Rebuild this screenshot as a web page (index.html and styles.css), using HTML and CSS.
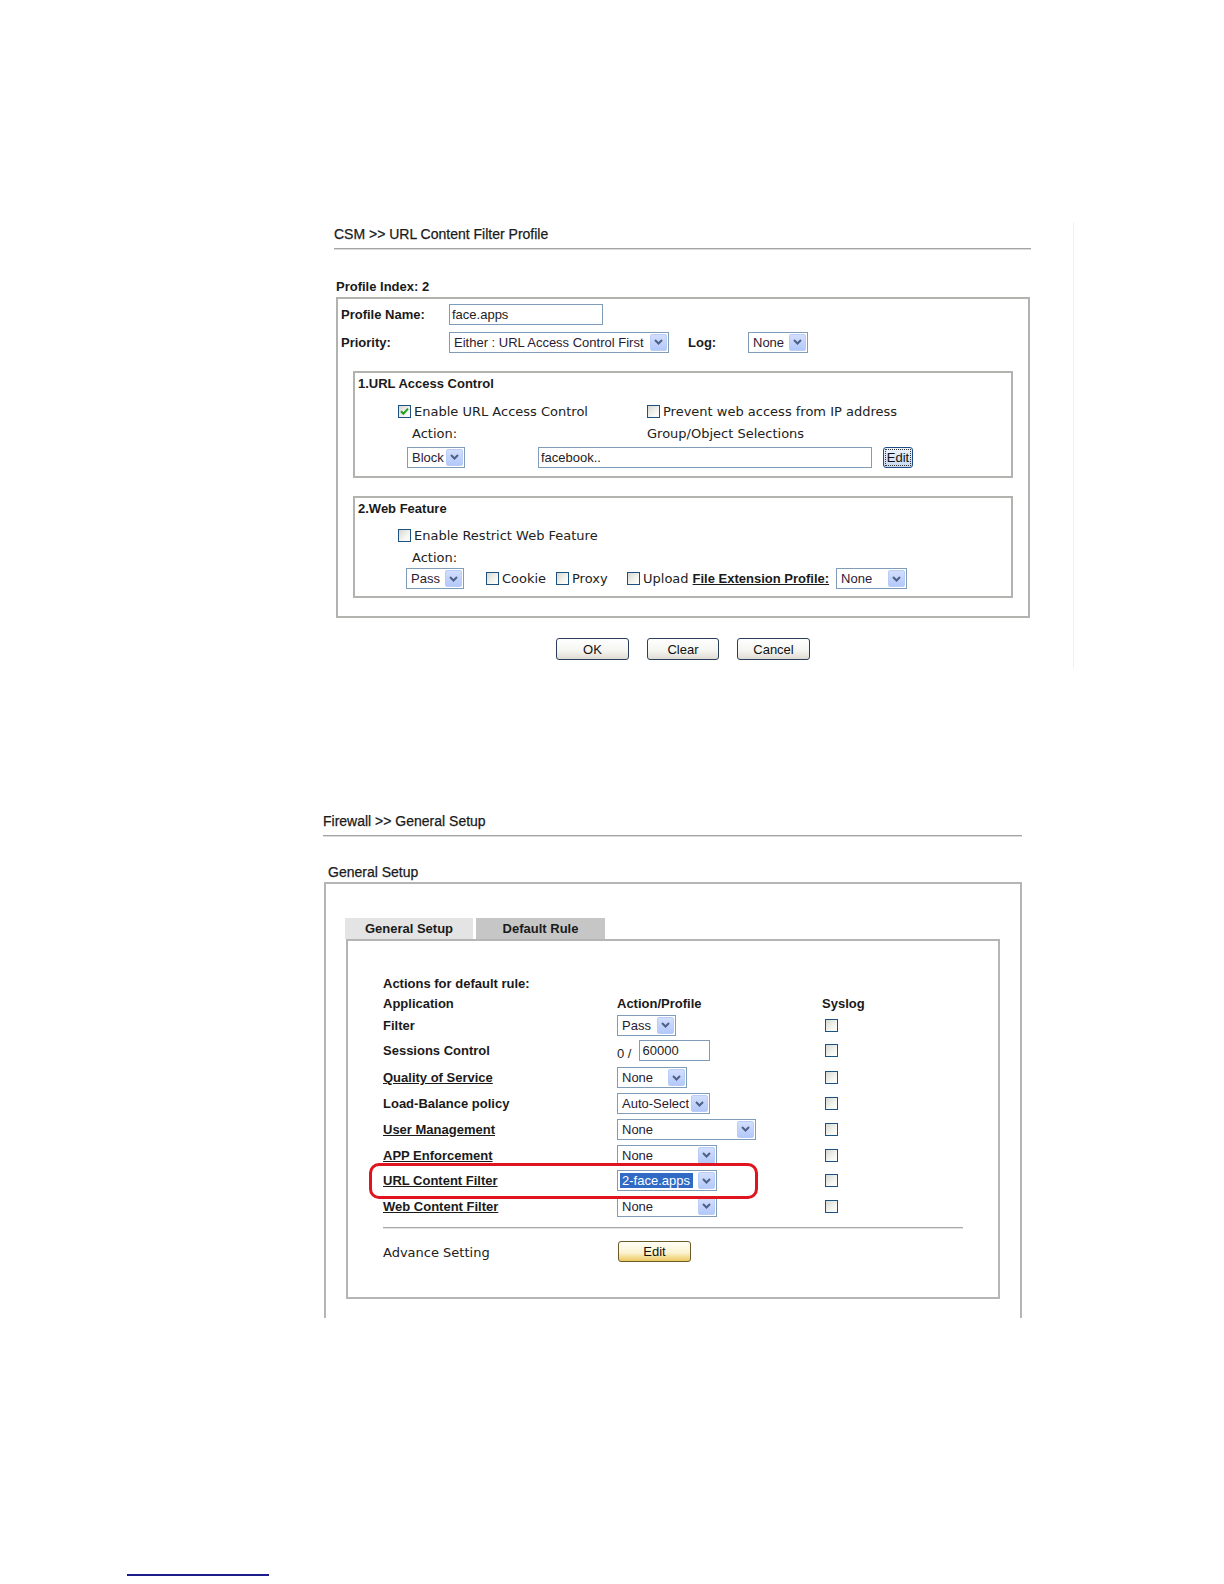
FILE: index.html
```html
<!DOCTYPE html>
<html>
<head>
<meta charset="utf-8">
<link rel="stylesheet" href="styles.css">
</head>
<body>
<div class="page">

  <section class="shot shot-csm">
    <div class="crumb">CSM &gt;&gt; URL Content Filter Profile</div>
    <div class="rule rule-csm"></div>
    <div class="idx">Profile Index: 2</div>
    <div class="frame">
      <div class="frow">
        <span class="flabel">Profile Name:</span>
        <span class="tbox w154">face.apps</span>
      </div>
      <div class="frow frow2">
        <span class="flabel">Priority:</span>
        <span class="sel w220"><span class="sel-text">Either : URL Access Control First</span><span class="sel-btn"><svg width="9" height="6" viewBox="0 0 9 6"><polyline points="1,1 4.5,4.5 8,1" fill="none" stroke="#4d6185" stroke-width="2"/></svg></span></span>
        <span class="loglabel">Log:</span>
        <span class="sel w60"><span class="sel-text">None</span><span class="sel-btn"><svg width="9" height="6" viewBox="0 0 9 6"><polyline points="1,1 4.5,4.5 8,1" fill="none" stroke="#4d6185" stroke-width="2"/></svg></span></span>
      </div>

      <div class="sub sub-url">
        <div class="sub-title">1.URL Access Control</div>
        <div class="srow cbrow">
          <span class="chk c249"><span class="cb"><svg width="11" height="11" viewBox="0 0 11 11"><polyline points="2,5.2 4.4,7.8 9,2.6" fill="none" stroke="#21a121" stroke-width="2"/></svg></span>Enable URL Access Control</span>
          <span class="chk"><span class="cb"></span>Prevent web access from IP address</span>
        </div>
        <div class="srow actrow">
          <span class="vtext c235">Action:</span>
          <span class="vtext">Group/Object Selections</span>
        </div>
        <div class="srow ctlrow">
          <span class="sel w58"><span class="sel-text">Block</span><span class="sel-btn"><svg width="9" height="6" viewBox="0 0 9 6"><polyline points="1,1 4.5,4.5 8,1" fill="none" stroke="#4d6185" stroke-width="2"/></svg></span></span>
          <span class="tbox w334 ml73">facebook..</span>
          <span class="btn-edit1"><span class="focus">Edit</span></span>
        </div>
      </div>

      <div class="sub sub-web">
        <div class="sub-title">2.Web Feature</div>
        <div class="srow cbrow cbrow2">
          <span class="chk"><span class="cb"></span>Enable Restrict Web Feature</span>
        </div>
        <div class="srow actrow">
          <span class="vtext">Action:</span>
        </div>
        <div class="srow ctlrow2">
          <span class="sel w58"><span class="sel-text">Pass</span><span class="sel-btn"><svg width="9" height="6" viewBox="0 0 9 6"><polyline points="1,1 4.5,4.5 8,1" fill="none" stroke="#4d6185" stroke-width="2"/></svg></span></span>
          <span class="chk c70 ml22"><span class="cb"></span>Cookie</span>
          <span class="chk c71"><span class="cb"></span>Proxy</span>
          <span class="chk"><span class="cb"></span>Upload</span>
          <span class="fext">File Extension Profile:</span>
          <span class="sel w71"><span class="sel-text">None</span><span class="sel-btn"><svg width="9" height="6" viewBox="0 0 9 6"><polyline points="1,1 4.5,4.5 8,1" fill="none" stroke="#4d6185" stroke-width="2"/></svg></span></span>
        </div>
      </div>
    </div>
    <div class="btns">
      <span class="btn w73">OK</span>
      <span class="btn w72">Clear</span>
      <span class="btn w73">Cancel</span>
    </div>
  </section>

  <section class="shot shot-fw">
    <div class="crumb">Firewall &gt;&gt; General Setup</div>
    <div class="rule rule-fw"></div>
    <div class="glabel">General Setup</div>
    <div class="gframe">
      <div class="tabs">
        <span class="tab tab-a">General Setup</span>
        <span class="tab tab-b">Default Rule</span>
      </div>
      <div class="inner">
        <div class="rules">
          <div class="cell h20 b span3">Actions for default rule:</div>
          <div class="cell h20 b">Application</div>
          <div class="cell h20 b">Action/Profile</div>
          <div class="cell h20 b">Syslog</div>

          <div class="cell h24 b">Filter</div>
          <div class="cell h24"><span class="sel w59"><span class="sel-text">Pass</span><span class="sel-btn"><svg width="9" height="6" viewBox="0 0 9 6"><polyline points="1,1 4.5,4.5 8,1" fill="none" stroke="#4d6185" stroke-width="2"/></svg></span></span></div>
          <div class="cell h24"><span class="cb cbs"></span></div>

          <div class="cell h27 b">Sessions Control</div>
          <div class="cell h27"><span class="zero">0 /</span><span class="tbox w71">60000</span></div>
          <div class="cell h27"><span class="cb cbs"></span></div>

          <div class="cell h27 b u">Quality of Service</div>
          <div class="cell h27"><span class="sel w70"><span class="sel-text">None</span><span class="sel-btn"><svg width="9" height="6" viewBox="0 0 9 6"><polyline points="1,1 4.5,4.5 8,1" fill="none" stroke="#4d6185" stroke-width="2"/></svg></span></span></div>
          <div class="cell h27"><span class="cb cbs"></span></div>

          <div class="cell h25 b">Load-Balance policy</div>
          <div class="cell h25"><span class="sel w93"><span class="sel-text">Auto-Select</span><span class="sel-btn"><svg width="9" height="6" viewBox="0 0 9 6"><polyline points="1,1 4.5,4.5 8,1" fill="none" stroke="#4d6185" stroke-width="2"/></svg></span></span></div>
          <div class="cell h25"><span class="cb cbs"></span></div>

          <div class="cell h26 b u">User Management</div>
          <div class="cell h26"><span class="sel w139"><span class="sel-text">None</span><span class="sel-btn"><svg width="9" height="6" viewBox="0 0 9 6"><polyline points="1,1 4.5,4.5 8,1" fill="none" stroke="#4d6185" stroke-width="2"/></svg></span></span></div>
          <div class="cell h26"><span class="cb cbs"></span></div>

          <div class="cell h26 b u">APP Enforcement</div>
          <div class="cell h26"><span class="sel w100"><span class="sel-text">None</span><span class="sel-btn"><svg width="9" height="6" viewBox="0 0 9 6"><polyline points="1,1 4.5,4.5 8,1" fill="none" stroke="#4d6185" stroke-width="2"/></svg></span></span></div>
          <div class="cell h26"><span class="cb cbs"></span></div>

          <div class="cell h25 b u">URL Content Filter</div>
          <div class="cell h25"><span class="sel w100 sel-hl"><span class="sel-text"><span class="hl">2-face.apps</span></span><span class="sel-btn"><svg width="9" height="6" viewBox="0 0 9 6"><polyline points="1,1 4.5,4.5 8,1" fill="none" stroke="#4d6185" stroke-width="2"/></svg></span></span></div>
          <div class="cell h25"><span class="cb cbs"></span></div>

          <div class="cell h26 b u">Web Content Filter</div>
          <div class="cell h26"><span class="sel w100"><span class="sel-text">None</span><span class="sel-btn"><svg width="9" height="6" viewBox="0 0 9 6"><polyline points="1,1 4.5,4.5 8,1" fill="none" stroke="#4d6185" stroke-width="2"/></svg></span></span></div>
          <div class="cell h26"><span class="cb cbs"></span></div>
        </div>
        <div class="sep"></div>
        <div class="adv">
          <span class="adv-label">Advance Setting</span>
          <span class="btn-edit2">Edit</span>
        </div>
        <div class="callout"></div>
      </div>
    </div>
  </section>

  <div class="footrule"></div>
</div>
</body>
</html>
```

FILE: styles.css
```css
* { box-sizing: border-box; }

body {
  margin: 0;
  background: #fff;
  font-family: "Liberation Sans", Arial, sans-serif;
  font-size: 13px;
  color: #111;
}

.page {
  width: 1224px;
  height: 1584px;
  overflow: hidden;
  padding-top: 222px;
}

/* ---------- shared ---------- */
.crumb {
  font-size: 14px;
  line-height: 20px;
  height: 20px;
  color: #1a1a1a;
  -webkit-text-stroke: 0.25px #1a1a1a;
}

.rule {
  height: 2px;
  margin-top: 4px;
  border-top: 1px solid #a4a4a4;
  border-bottom: 1px solid #dcdcdc;
}

.tbox {
  display: inline-flex;
  align-items: center;
  height: 21px;
  border: 1px solid #7f9db9;
  background: #fff;
  padding-left: 2px;
  font-size: 13px;
  color: #222;
}

.sel {
  display: inline-flex;
  align-items: center;
  justify-content: space-between;
  height: 21px;
  border: 1px solid #7f9db9;
  background: #fff;
  padding-left: 4px;
  font-size: 13px;
  color: #2a1a33;
}
.sel-text { white-space: nowrap; overflow: hidden; }
.sel-btn {
  flex: none;
  width: 17px;
  height: 17px;
  margin-right: 1px;
  border: 1px solid #b9cdf6;
  border-radius: 2px;
  background: linear-gradient(#d2defd, #b3c9fa);
  display: flex;
  align-items: center;
  justify-content: center;
}

.cb {
  display: inline-flex;
  align-items: center;
  justify-content: center;
  flex: none;
  width: 13px;
  height: 13px;
  border: 1px solid #1c5180;
  background: linear-gradient(135deg, #d8d8d2 0%, #f4f4f0 60%, #ffffff 100%);
  margin-right: 3px;
}

.chk {
  display: inline-flex;
  align-items: center;
  font-family: "DejaVu Sans", Verdana, sans-serif;
  font-size: 13px;
  color: #222;
  white-space: nowrap;
}

.vtext {
  font-family: "DejaVu Sans", Verdana, sans-serif;
  font-size: 13px;
  color: #222;
}

/* widths */
.w58 { width: 58px; }
.w59 { width: 59px; }
.w60 { width: 60px; }
.w70 { width: 70px; }
.w71 { width: 71px; }
.w72 { width: 72px; }
.w73 { width: 73px; }
.w93 { width: 93px; }
.w100 { width: 100px; }
.w139 { width: 139px; }
.w154 { width: 154px; }
.w220 { width: 220px; }
.w334 { width: 334px; }
.c70 { width: 70px; }
.c71 { width: 71px; }
.c235 { width: 235px; display: inline-block; }
.c249 { width: 249px; }
.ml22 { margin-left: 22px; }
.ml73 { margin-left: 73px; }

/* ---------- CSM screenshot ---------- */
.shot-csm {
  margin-left: 334px;
  width: 740px;
  padding-top: 2px;
  padding-bottom: 8px;
  border-right: 1px solid #f1f1f1;
}
.rule-csm { width: 697px; }

.idx {
  margin-top: 27px;
  margin-left: 2px;
  line-height: 20px;
  height: 20px;
  font-weight: bold;
  color: #1a1a1a;
}

.frame {
  margin-left: 2px;
  width: 694px;
  border: 2px solid #b2b2ae;
  padding: 3px 0 18px 0;
}

.frow {
  display: flex;
  align-items: center;
  height: 24px;
  padding-left: 3px;
}
.frow2 { margin-top: 4px; }
.flabel {
  width: 108px;
  font-weight: bold;
  color: #1a1a1a;
}
.loglabel {
  margin-left: 19px;
  width: 60px;
  font-weight: bold;
  color: #1a1a1a;
}

.sub {
  margin: 17px 15px 0 15px;
  border: 2px solid #b2b2ae;
  padding-bottom: 8px;
}
.sub-web { margin-top: 18px; padding-bottom: 6px; }

.sub-title {
  line-height: 22px;
  height: 22px;
  padding-left: 3px;
  font-weight: bold;
  color: #1a1a1a;
}

.srow {
  display: flex;
  align-items: center;
}
.cbrow {
  margin-top: 4px;
  height: 24px;
  padding-left: 43px;
}
.cbrow2 { margin-top: 3px; }
.actrow {
  height: 20px;
  padding-left: 57px;
}
.ctlrow {
  margin-top: 3px;
  height: 22px;
  padding-left: 52px;
}
.ctlrow2 {
  height: 23px;
  padding-left: 51px;
}

.btn-edit1 {
  margin-left: 11px;
  width: 30px;
  height: 21px;
  border: 1px solid #1f4c84;
  border-radius: 3px;
  background: linear-gradient(#eef4fc, #c9d9f1);
  display: flex;
  align-items: center;
  justify-content: center;
  font-size: 13px;
  color: #111;
}
.focus {
  border: 1px dotted #333;
  line-height: 15px;
  padding: 0 1px;
}

.fext {
  margin-left: 4px;
  font-weight: bold;
  text-decoration: underline;
  color: #1a1a1a;
  margin-right: 7px;
}

.btns {
  margin-top: 20px;
  margin-left: 2px;
  width: 694px;
  display: flex;
  justify-content: center;
  gap: 18px;
}
.btn {
  height: 22px;
  border: 1px solid #2b3f5c;
  border-radius: 3px;
  background: linear-gradient(#ffffff 0%, #f4f4f0 60%, #dedbd2 100%);
  display: flex;
  align-items: center;
  justify-content: center;
  font-size: 13px;
  color: #111;
}

/* ---------- Firewall screenshot ---------- */
.shot-fw {
  margin-top: 143px;
  margin-left: 323px;
  width: 700px;
}
.rule-fw { width: 699px; }

.glabel {
  margin-top: 25px;
  margin-left: 5px;
  line-height: 20px;
  height: 20px;
  font-size: 14px;
  color: #1a1a1a;
  -webkit-text-stroke: 0.25px #1a1a1a;
}

.gframe {
  margin-left: 1px;
  width: 698px;
  height: 436px;
  border: 2px solid #b5b5b5;
  border-bottom: none;
  padding-top: 34px;
}

.tabs {
  display: flex;
  margin-left: 19px;
  height: 21px;
}
.tab {
  height: 21px;
  display: flex;
  align-items: center;
  justify-content: center;
  font-weight: bold;
  color: #1a1a1a;
}
.tab-a { width: 128px; background: #e4e4e4; }
.tab-b { width: 129px; margin-left: 3px; background: #c6c6c6; }

.inner {
  position: relative;
  margin-left: 20px;
  width: 654px;
  height: 360px;
  border: 2px solid #b5b5b5;
  padding: 32px 0 0 35px;
}

.rules {
  display: grid;
  grid-template-columns: 234px 205px 160px;
}
.cell {
  display: flex;
  align-items: center;
  color: #1a1a1a;
}
.span3 { grid-column: 1 / 4; }
.b { font-weight: bold; }
.u { text-decoration: underline; }
.h20 { height: 20px; }
.h24 { height: 24px; }
.h25 { height: 25px; }
.h26 { height: 26px; }
.h27 { height: 27px; }

.cbs { margin-left: 3px; }

.zero {
  padding-top: 6px;
  margin-right: 8px;
  color: #222;
}

.hl {
  display: inline-block;
  background: #316ac5;
  color: #fff;
  padding: 0 3px 0 2px;
  line-height: 15px;
  outline: 1px dotted #8aa3d0;
}
.sel-hl { padding-left: 2px; }

.sep {
  margin-top: 8px;
  width: 580px;
  height: 2px;
  border-top: 1px solid #a8a8a8;
  border-bottom: 1px solid #e2e2e2;
}

.adv {
  display: flex;
  align-items: center;
  height: 30px;
  margin-top: 7px;
}
.adv-label {
  width: 235px;
  font-family: "DejaVu Sans", Verdana, sans-serif;
  font-size: 13px;
  color: #222;
  padding-top: 2px;
}
.btn-edit2 {
  width: 73px;
  height: 21px;
  border: 1px solid #6b5a28;
  border-radius: 3px;
  background: linear-gradient(#fffef6 0%, #fbf3d2 55%, #ecc95f 100%);
  display: flex;
  align-items: center;
  justify-content: center;
  font-size: 13px;
  color: #111;
}

.callout {
  position: absolute;
  left: 21px;
  top: 222px;
  width: 389px;
  height: 36px;
  border: 3px solid #e0141e;
  border-radius: 10px;
}

.footrule {
  margin-top: 256px;
  margin-left: 127px;
  width: 142px;
  height: 2px;
  background: #1c1c8a;
}
```
